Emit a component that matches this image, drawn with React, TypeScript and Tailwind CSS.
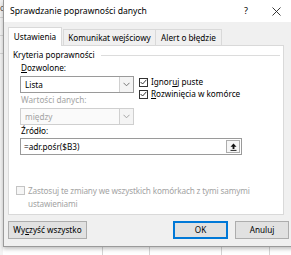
import React from "react";

const font = { fontFamily: '"Noto Sans", "Open Sans", sans-serif' };

function Chevron({ disabled }: { disabled?: boolean }) {
  return (
    <div className="flex h-full w-[14px] items-center justify-center border-l border-[#d0d0d0] bg-[#f4f4f4]">
      <svg width="7" height="5" viewBox="0 0 7 5">
        <path d="M0.5 0.8 L3.5 3.8 L6.5 0.8" fill="none" stroke={disabled ? "#9a9a9a" : "#6a6a6a"} strokeWidth="0.9" />
      </svg>
    </div>
  );
}

function Check({ checked, disabled }: { checked?: boolean; disabled?: boolean }) {
  return (
    <div
      className={`flex h-[9px] w-[9px] shrink-0 items-center justify-center border ${
        disabled ? "border-[#c4c4c4] bg-[#f6f6f6]" : "border-[#333] bg-white"
      }`}
    >
      {checked && (
        <svg width="7" height="6" viewBox="0 0 7 6">
          <path d="M0.6 3 L2.6 5 L6.4 0.8" fill="none" stroke="#222" strokeWidth="0.9" />
        </svg>
      )}
    </div>
  );
}

export default function App() {
  return (
    <div className="relative h-[255px] w-[291px] overflow-hidden bg-white text-[8.2px] leading-[12px] text-black" style={font}>
      {/* excel background strip at left */}
      <div className="absolute left-0 top-0 flex h-full w-[3px] flex-col bg-[#f3f3f3]">
        <div className="h-[18px] border-b border-[#d4d4d4] text-[7px] leading-[18px] text-[#333]">C</div>
        <div className="h-[18px] border-b border-[#d4d4d4]" />
        <div className="h-[18px] border-b border-[#d4d4d4]" />
      </div>
      {/* grid at bottom */}
      <div className="absolute bottom-0 left-0 flex h-[8px] w-full">
        <div className="w-[103px] border-r border-[#d4d4d4]" />
        <div className="w-[47px] border-r border-[#d4d4d4]" />
        <div className="w-[72px] border-r border-[#d4d4d4]" />
        <div className="w-[48px] border-r border-[#d4d4d4]" />
      </div>

      {/* dialog */}
      <div className="absolute left-[3px] top-0 flex h-[247px] w-[292px] flex-col border-b border-l border-[#9a9a9a] bg-[#f0f0f0] shadow-[0_2px_4px_rgba(0,0,0,0.25)]">
        {/* title bar */}
        <div className="flex h-[22px] shrink-0 items-center bg-white pl-[6px] text-[8.6px]">
          <span>Sprawdzanie poprawności danych</span>
          <span className="ml-auto mr-[24px] text-[9px]">?</span>
          <svg width="9" height="9" viewBox="0 0 9 9" className="mr-[14px]">
            <path d="M0.5 0.5 L8.5 8.5 M8.5 0.5 L0.5 8.5" stroke="#222" strokeWidth="0.9" />
          </svg>
        </div>

        {/* tabs */}
        <div className="relative z-10 -mb-px flex h-[24px] shrink-0 items-end pl-[4px]">
          <div className="flex h-[19px] w-[54px] items-center justify-center border border-b-0 border-[#d9d9d9] bg-white">Ustawienia</div>
          <div className="ml-px flex h-[17px] w-[93px] items-center justify-center border border-[#d9d9d9] bg-[#f0f0f0]">Komunikat wejściowy</div>
          <div className="flex h-[17px] w-[66px] items-center justify-center border border-l-0 border-[#d9d9d9] bg-[#f0f0f0]">Alert o błędzie</div>
        </div>

        {/* panel */}
        <div className="ml-[4px] flex h-[170px] w-[276px] shrink-0 flex-col border border-[#d9d9d9] bg-white pl-[4px]">
          <div className="mt-[3px] flex items-center pr-[3px]">
            <span>Kryteria poprawności</span>
            <div className="ml-[6px] h-px flex-1 bg-[#dcdcdc]" />
          </div>

          <div className="flex pl-[7px]">
            <div className="flex w-[114px] flex-col">
              <div className="mt-px pl-px">
                <span className="underline">D</span>ozwolone:
              </div>
              <div className="mt-[2px] flex h-[17px] items-stretch border border-[#9a9a9a] bg-white">
                <div className="flex flex-1 items-center pl-[4px]">Lista</div>
                <Chevron />
              </div>
              <div className="mt-px pl-px text-[#a3a3a3]">Wartości danych:</div>
              <div className="mt-[2px] flex h-[17px] items-stretch border border-[#cfcfcf] bg-[#fafafa] text-[#a3a3a3]">
                <div className="flex flex-1 items-center pl-[4px]">między</div>
                <Chevron disabled />
              </div>
            </div>
            <div className="ml-[5px] mt-[15px] flex flex-col">
              <div className="flex h-[12px] items-center gap-[3px]">
                <Check checked />
                <span>
                  Ignor<span className="underline">u</span>j puste
                </span>
              </div>
              <div className="flex h-[12px] items-center gap-[3px]">
                <Check checked />
                <span>
                  <span className="underline">R</span>ozwinięcia w komórce
                </span>
              </div>
            </div>
          </div>

          <div className="pl-[7px]">
            <div className="pl-px">
              Źródło:
            </div>
            <div className="mt-px flex h-[17px] w-[222px] items-center border border-[#9a9a9a] bg-white pl-[3px] pr-[1px]">
              <span className="flex-1">=adr.pośr($B3)</span>
              <div className="flex h-[13px] w-[14px] items-center justify-center border border-[#adadad] bg-[#f6f6f6]">
                <svg width="7" height="8" viewBox="0 0 7 8">
                  <path d="M3.5 0.5 L6.5 3.8 L4.4 3.8 L4.4 6 L2.6 6 L2.6 3.8 L0.5 3.8 Z" fill="#111" />
                  <path d="M0.5 7.4 L6.5 7.4" stroke="#111" strokeWidth="0.9" />
                </svg>
              </div>
            </div>
          </div>

          <div className="ml-[3px] mt-[29px] flex items-start gap-[3px] tracking-[-0.15px] text-[#a3a3a3] leading-[13px]">
            <div className="mt-[2px]">
              <Check disabled />
            </div>
            <span>
              Zastosuj te zmiany we wszystkich komórkach z tymi samymi
              <br />
              ustawieniami
            </span>
          </div>
        </div>

        {/* buttons */}
        <div className="mt-[6px] flex pl-[4px]">
          <div className="flex h-[18px] w-[79px] items-center justify-center border border-[#adadad] bg-[#e1e1e1]">
            Wy<span className="underline">c</span>zyść wszystko
          </div>
          <div className="ml-[86px] flex h-[18px] w-[55px] items-center justify-center border-2 border-[#0078d7] bg-[#e1e1e1]">
            OK
          </div>
          <div className="ml-[7px] flex h-[18px] w-[54px] items-center justify-center border border-[#adadad] bg-[#e1e1e1]">
            Anuluj
          </div>
        </div>
      </div>
    </div>
  );
}
